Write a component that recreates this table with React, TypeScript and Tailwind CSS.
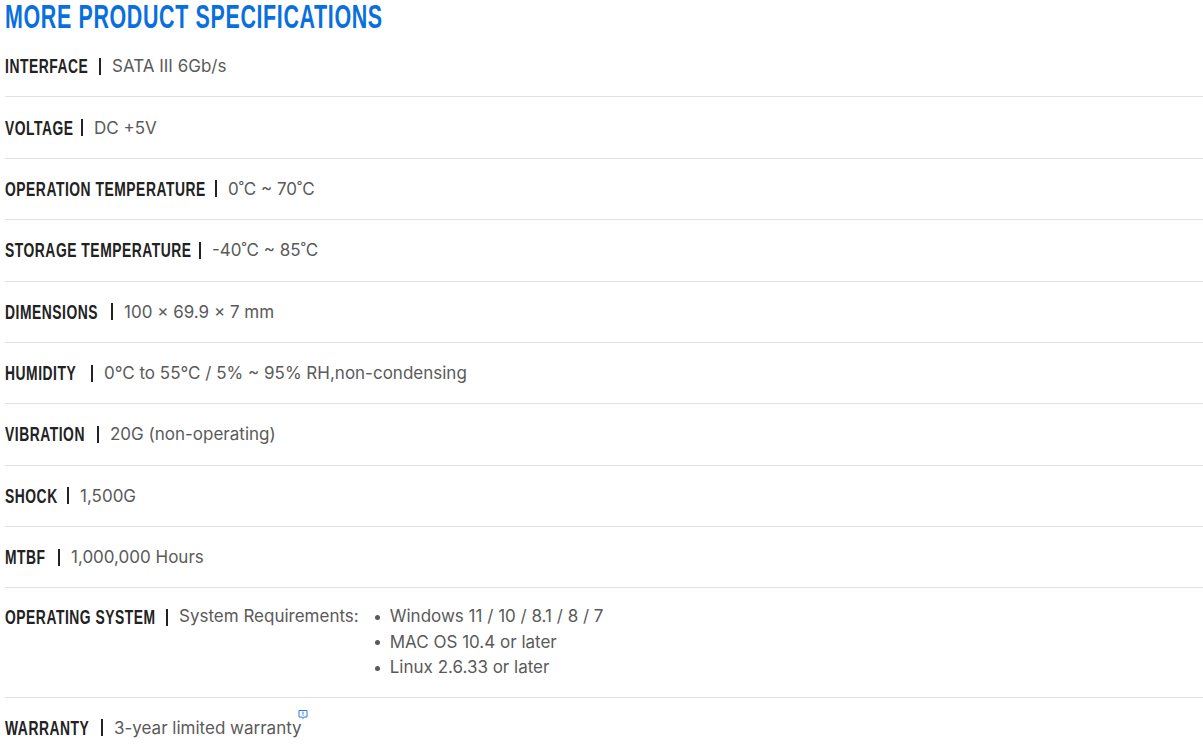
import React from "react";

const specs: { label: string; w: string; value: React.ReactNode }[] = [
  { label: "Interface", w: "w-[82px]", value: "SATA III 6Gb/s" },
  { label: "Voltage", w: "w-[64px]", value: "DC +5V" },
  { label: "Operation Temperature", w: "w-[198px]", value: "0˚C ~ 70˚C" },
  { label: "Storage Temperature", w: "w-[182px]", value: "-40˚C ~ 85˚C" },
  { label: "Dimensions", w: "w-[94px]", value: "100 × 69.9 × 7 mm" },
  { label: "Humidity", w: "w-[74px]", value: "0°C to 55°C / 5% ~ 95% RH,non-condensing" },
  { label: "Vibration", w: "w-[80px]", value: "20G (non-operating)" },
  { label: "Shock", w: "w-[50px]", value: "1,500G" },
  { label: "MTBF", w: "w-[41px]", value: "1,000,000 Hours" },
];

const osList = ["Windows 11 / 10 / 8.1 / 8 / 7", "MAC OS 10.4 or later", "Linux 2.6.33 or later"];

function Label({ w, children }: { w: string; children: React.ReactNode }) {
  return (
    <span className="flex items-center shrink-0 h-[26px]">
      <span className={`${w} flex whitespace-nowrap`}>
        <span className="block origin-left scale-x-[0.66] font-['Liberation_Sans','Arial',sans-serif] font-bold uppercase text-[21px] leading-[26px] text-[#222] tracking-[0.8px]">
          {children}
        </span>
      </span>
      <span className="ml-[12px] mr-[11px] w-[2px] h-[17px] bg-[#222]" />
    </span>
  );
}

function NoteIcon() {
  return (
    <svg width="10" height="11" viewBox="0 0 10 11" className="absolute -right-[6px] -top-[6px]">
      <path d="M1 1.5h8v6.5H6.2L5 9.6 3.8 8H1z" fill="#fff" stroke="#2a7de1" strokeWidth="1" />
      <rect x="4.5" y="2.6" width="1" height="3" fill="#2a7de1" />
      <rect x="4.5" y="6.2" width="1" height="1" fill="#2a7de1" />
    </svg>
  );
}

export default function App() {
  return (
    <div className="bg-white min-h-screen pl-[5px] font-['Inter',sans-serif]">
      <h2 className="w-[375px] flex whitespace-nowrap mb-[2px]">
        <span className="block origin-left scale-x-[0.64] font-['Liberation_Sans','Arial',sans-serif] font-bold uppercase text-[33.5px] leading-[34px] text-[#0a6fde] tracking-[1px]">
          More Product Specifications
        </span>
      </h2>

      <div>
        {specs.map((s) => (
          <div key={s.label} className="flex items-center py-[17.2px] border-b border-[#e2e2e2] text-[17px] leading-[26px] text-[#5a5a5a]">
            <Label w={s.w}>{s.label}</Label>
            <span>{s.value}</span>
          </div>
        ))}

        <div className="flex items-start py-[16px] border-b border-[#e2e2e2] text-[17px] leading-[25.5px] text-[#5a5a5a]">
          <Label w="w-[149px]">Operating System</Label>
          <span className="mr-[16px]">System Requirements:</span>
          <ul className="flex flex-col">
            {osList.map((o) => (
              <li key={o} className="flex items-center">
                <span className="w-[5px] h-[5px] rounded-full bg-[#5a5a5a] mr-[10px]" />
                {o}
              </li>
            ))}
          </ul>
        </div>

        <div className="flex items-center py-[17px] text-[17px] leading-[26px] text-[#5a5a5a]">
          <Label w="w-[84px]">Warranty</Label>
          <span className="relative">
            3-year limited warranty
            <NoteIcon />
          </span>
        </div>
      </div>
    </div>
  );
}
